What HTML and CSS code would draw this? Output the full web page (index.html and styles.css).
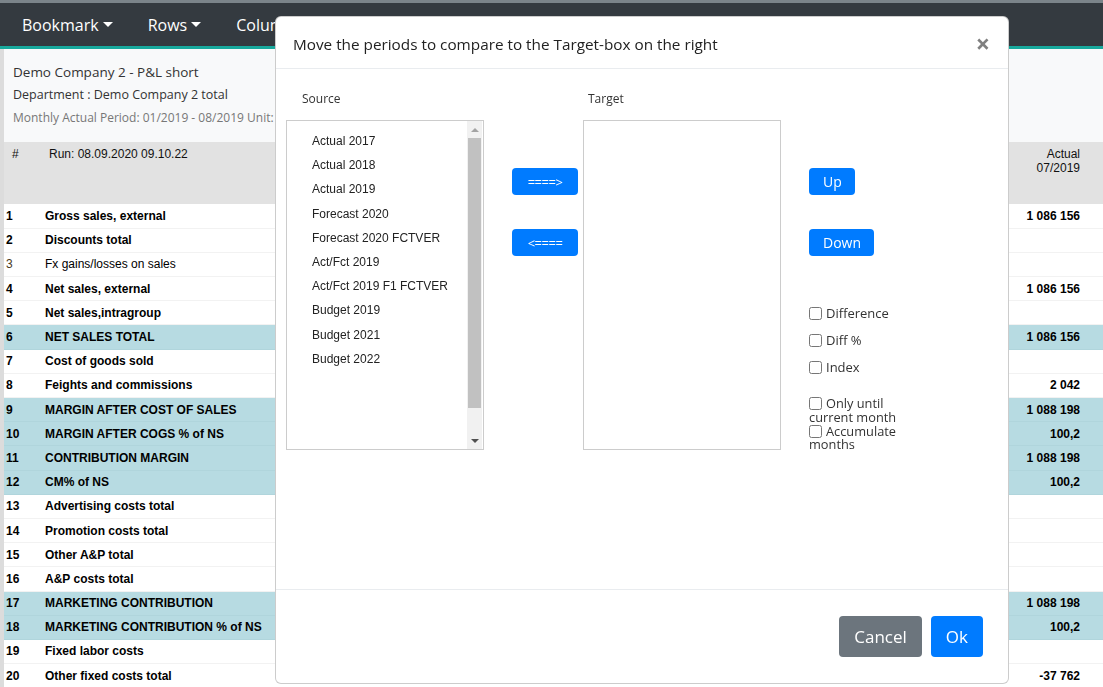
FILE: index.html
```html
<!DOCTYPE html>
<html lang="en">

<head>
    <meta charset="UTF-8">
    <meta name="viewport" content="width=device-width, initial-scale=1.0">
    <title>Report</title>
    <link rel="stylesheet" href="styles.css">
</head>

<body>
    <nav class="navbar">
        <a class="nav-link">Bookmark<span class="caret"></span></a>
        <a class="nav-link">Rows<span class="caret"></span></a>
        <a class="nav-link">Columns<span class="caret"></span></a>
    </nav>

    <div class="page">
        <div class="report-info">
            <div class="report-title">Demo Company 2 - P&amp;L short</div>
            <div class="report-dept">Department : Demo Company 2 total</div>
            <div class="report-period">Monthly Actual Period: 01/2019 - 08/2019 Unit: EUR</div>
        </div>

        <table class="report-table">
            <thead>
                <tr>
                    <th class="col-num">#</th>
                    <th class="col-label">Run: 08.09.2020 09.10.22</th>
                    <th class="col-fill"></th>
                    <th class="col-value">Actual<br>07/2019</th>
                    <th class="col-end"></th>
                </tr>
            </thead>
            <tbody>
                <tr><td>1</td><td>Gross sales, external</td><td></td><td class="num">1 086 156</td><td></td></tr>
                <tr><td>2</td><td>Discounts total</td><td></td><td class="num"></td><td></td></tr>
                <tr class="plain"><td>3</td><td>Fx gains/losses on sales</td><td></td><td class="num"></td><td></td></tr>
                <tr><td>4</td><td>Net sales, external</td><td></td><td class="num">1 086 156</td><td></td></tr>
                <tr><td>5</td><td>Net sales,intragroup</td><td></td><td class="num"></td><td></td></tr>
                <tr class="total"><td>6</td><td>NET SALES TOTAL</td><td></td><td class="num">1 086 156</td><td></td></tr>
                <tr><td>7</td><td>Cost of goods sold</td><td></td><td class="num"></td><td></td></tr>
                <tr><td>8</td><td>Feights and commissions</td><td></td><td class="num">2 042</td><td></td></tr>
                <tr class="total"><td>9</td><td>MARGIN AFTER COST OF SALES</td><td></td><td class="num">1 088 198</td><td></td></tr>
                <tr class="total"><td>10</td><td>MARGIN AFTER COGS % of NS</td><td></td><td class="num">100,2</td><td></td></tr>
                <tr class="total"><td>11</td><td>CONTRIBUTION MARGIN</td><td></td><td class="num">1 088 198</td><td></td></tr>
                <tr class="total"><td>12</td><td>CM% of NS</td><td></td><td class="num">100,2</td><td></td></tr>
                <tr><td>13</td><td>Advertising costs total</td><td></td><td class="num"></td><td></td></tr>
                <tr><td>14</td><td>Promotion costs total</td><td></td><td class="num"></td><td></td></tr>
                <tr><td>15</td><td>Other A&amp;P total</td><td></td><td class="num"></td><td></td></tr>
                <tr><td>16</td><td>A&amp;P costs total</td><td></td><td class="num"></td><td></td></tr>
                <tr class="total"><td>17</td><td>MARKETING CONTRIBUTION</td><td></td><td class="num">1 088 198</td><td></td></tr>
                <tr class="total"><td>18</td><td>MARKETING CONTRIBUTION % of NS</td><td></td><td class="num">100,2</td><td></td></tr>
                <tr><td>19</td><td>Fixed labor costs</td><td></td><td class="num"></td><td></td></tr>
                <tr><td>20</td><td>Other fixed costs total</td><td></td><td class="num">-37 762</td><td></td></tr>
            </tbody>
        </table>
    </div>

    <!-- Compare periods dialog -->
    <div class="modal">
        <div class="modal-header">
            <span class="modal-title">Move the periods to compare to the Target-box on the right</span>
            <span class="modal-close">&times;</span>
        </div>

        <div class="modal-body">
            <div class="list-col">
                <div class="list-label source-label">Source</div>
                <div class="list-box">
                    <div class="list-items">
                        <div>Actual 2017</div>
                        <div>Actual 2018</div>
                        <div>Actual 2019</div>
                        <div>Forecast 2020</div>
                        <div>Forecast 2020 FCTVER</div>
                        <div>Act/Fct 2019</div>
                        <div>Act/Fct 2019 F1 FCTVER</div>
                        <div>Budget 2019</div>
                        <div>Budget 2021</div>
                        <div>Budget 2022</div>
                    </div>
                    <div class="scrollbar">
                        <span class="arrow-up"></span>
                        <span class="thumb"></span>
                        <span class="arrow-down"></span>
                    </div>
                </div>
            </div>

            <div class="move-col">
                <button class="btn btn-blue btn-move">====&gt;</button>
                <button class="btn btn-blue btn-move">&lt;====</button>
            </div>

            <div class="list-col">
                <div class="list-label target-label">Target</div>
                <div class="list-box"></div>
            </div>

            <div class="option-col">
                <button class="btn btn-blue btn-order">Up</button>
                <button class="btn btn-blue btn-order">Down</button>

                <div class="options">
                    <label class="option"><input type="checkbox">Difference</label>
                    <label class="option"><input type="checkbox">Diff %</label>
                    <label class="option"><input type="checkbox">Index</label>
                    <label class="option option-wrap"><input type="checkbox">Only until current month</label>
                    <label class="option option-wrap"><input type="checkbox">Accumulate months</label>
                </div>
            </div>
        </div>

        <div class="modal-footer">
            <button class="btn btn-lg btn-grey">Cancel</button>
            <button class="btn btn-lg btn-blue">Ok</button>
        </div>
    </div>
</body>

</html>
```

FILE: styles.css
```css
body {
    margin: 0;
    font-family: "Open Sans", Arial, sans-serif;
    background-color: #f8f9fa;
    border-top: 3px solid #7b848a;
    overflow: hidden;
}

.navbar {
    display: flex;
    align-items: center;
    height: 43px;
    padding-left: 5px;
    background-color: #343a40;
    border-bottom: 3px solid #18a99d;
}

.nav-link {
    display: flex;
    align-items: center;
    padding: 0 17px;
    margin-right: 1px;
    color: white;
    font-size: 16px;
}

.caret {
    display: inline-block;
    margin-left: 4px;
    border-top: 5px solid white;
    border-left: 5px solid transparent;
    border-right: 5px solid transparent;
}

.page {
    border-left: 4px solid #dcdcdc;
}

.report-info {
    padding: 12px 9px 0;
    height: 81px;
    color: #333;
}

.report-title {
    font-size: 13.5px;
    line-height: 22px;
}

.report-dept {
    font-size: 12.5px;
    line-height: 24px;
}

.report-period {
    font-size: 12px;
    line-height: 22px;
    color: #777;
}

.report-table {
    width: 100%;
    border-collapse: collapse;
    font-family: "Liberation Sans", Arial, sans-serif;
    font-size: 12px;
    background-color: white;
}

.report-table th {
    height: 57px;
    padding: 5px 0 0;
    vertical-align: top;
    background-color: #e2e2e2;
    font-weight: normal;
    text-align: left;
    color: #111;
    line-height: 14px;
}

.report-table th.col-num {
    width: 33px;
    padding-left: 8px;
}

.report-table th.col-label {
    width: 280px;
    padding-left: 4px;
}

.report-table th.col-value {
    width: 100px;
    text-align: right;
}

.report-table th.col-end,
.report-table td:last-child {
    width: 23px;
}

.report-table td {
    height: 24.2px;
    padding: 0;
    box-sizing: border-box;
    border-bottom: 1px solid #f2f2f2;
    font-weight: bold;
    color: #000;
}

.report-table td:first-child {
    padding-left: 2px;
}

.report-table tr.plain td {
    font-weight: normal;
}

.report-table tr.plain td:first-child {
    color: #4a3a20;
}

.report-table tr.total td {
    background-color: #b7dbe2;
    border-bottom-color: #b0d5dc;
}

.report-table td.num {
    text-align: right;
}

.modal {
    position: fixed;
    left: 275px;
    top: 16px;
    width: 734px;
    height: 668px;
    display: flex;
    flex-direction: column;
    box-sizing: border-box;
    background-color: white;
    border: 1px solid rgba(0, 0, 0, 0.2);
    border-radius: 6px;
    color: #333;
}

.modal-header {
    display: flex;
    align-items: center;
    justify-content: space-between;
    height: 52px;
    padding: 2px 18px 0 17px;
    box-sizing: border-box;
    border-bottom: 1px solid #e9ecef;
}

.modal-title {
    font-size: 15.3px;
    color: #222;
}

.modal-close {
    font-size: 25px;
    font-weight: bold;
    color: #808080;
    line-height: 1;
}

.modal-body {
    flex: 1;
    display: flex;
    padding: 20px 0 0 10px;
}

.list-col {
    width: 198px;
}

.list-label {
    height: 20px;
    line-height: 20px;
    margin-bottom: 11px;
    font-size: 12px;
    color: #333;
}

.source-label {
    padding-left: 16px;
}

.target-label {
    padding-left: 5px;
}

.list-box {
    display: flex;
    height: 330px;
    box-sizing: border-box;
    border: 1px solid #ccc;
    background-color: white;
}

.list-items {
    flex: 1;
    padding: 8px 0 0 25px;
    font-family: "Liberation Sans", Arial, sans-serif;
    font-size: 12px;
    line-height: 24.2px;
    color: #222;
}

.scrollbar {
    display: flex;
    flex-direction: column;
    align-items: center;
    width: 15px;
    margin-right: 1px;
    background-color: #f1f1f1;
}

.arrow-up,
.arrow-down {
    height: 17px;
    display: flex;
    align-items: center;
}

.arrow-up::before {
    content: "";
    border-bottom: 4px solid #a3a3a3;
    border-left: 4px solid transparent;
    border-right: 4px solid transparent;
}

.arrow-down {
    margin-top: auto;
}

.arrow-down::before {
    content: "";
    border-top: 4px solid #505050;
    border-left: 4px solid transparent;
    border-right: 4px solid transparent;
}

.thumb {
    width: 13px;
    height: 270px;
    background-color: #c1c1c1;
}

.btn {
    border: none;
    border-radius: 4px;
    font-family: "Open Sans", Arial, sans-serif;
    color: white;
    padding: 0;
    cursor: pointer;
}

.btn-blue {
    background-color: #007bff;
}

.btn-grey {
    background-color: #6c757d;
}

.move-col {
    display: flex;
    flex-direction: column;
    align-items: flex-start;
    width: 66px;
    margin: 0 5px 0 28px;
    padding-top: 79px;
}

.btn-move {
    width: 66px;
    height: 27px;
    margin-bottom: 34px;
    font-size: 13px;
    letter-spacing: -0.5px;
}

.option-col {
    display: flex;
    flex-direction: column;
    align-items: flex-start;
    width: 100px;
    margin-left: 28px;
    padding-top: 79px;
}

.btn-order {
    height: 27px;
    padding: 0 13px 0 14px;
    margin-bottom: 34px;
    font-size: 14px;
}

.options {
    display: flex;
    flex-direction: column;
    margin-top: 16px;
    font-size: 13px;
    color: #333;
}

.option {
    display: block;
    line-height: 14px;
    margin-bottom: 13px;
}

.option input {
    width: 13px;
    height: 13px;
    margin: 0 4px 0 0;
    vertical-align: -2px;
}

.option-wrap {
    width: 92px;
    margin-top: 10px;
    margin-bottom: 0;
    font-size: 12.8px;
    line-height: 13.8px;
}

.option-wrap + .option-wrap {
    margin-top: 0;
}

.modal-footer {
    display: flex;
    justify-content: flex-end;
    gap: 9px;
    height: 94px;
    padding: 26px 25px 0 0;
    box-sizing: border-box;
    border-top: 1px solid #e9ecef;
}

.btn-lg {
    height: 41px;
    padding: 0 15px;
    font-size: 17px;
}
```
